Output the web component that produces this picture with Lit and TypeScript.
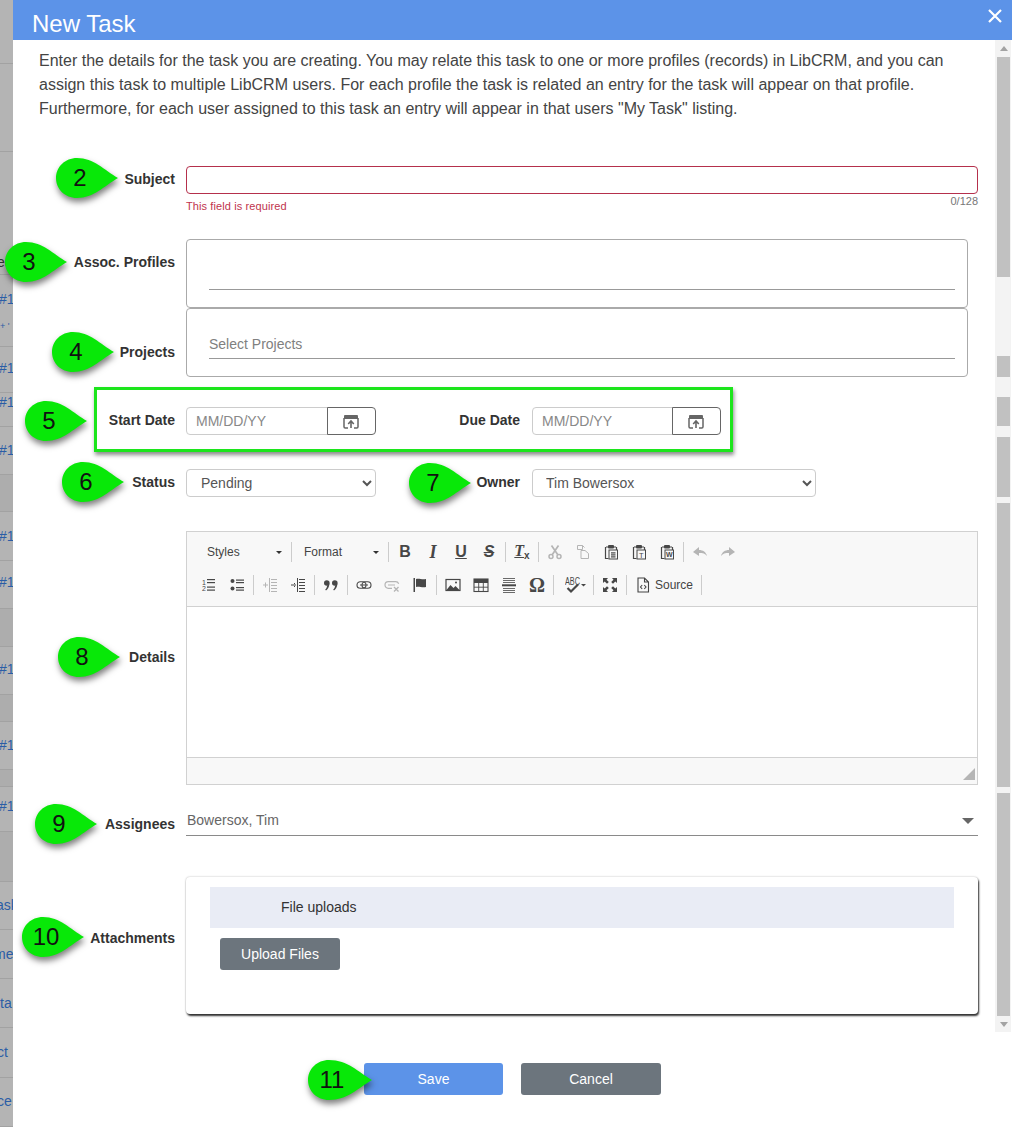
import { LitElement, html, css, svg } from "lit";
import { customElement } from "lit/decorators.js";

type StripRow = { h: number; t?: string; y?: number; x?: number; dark?: boolean; nb?: boolean; ink?: boolean; tiny?: boolean };
const stripRows: StripRow[] = [
  { h: 64 }, { h: 88 },
  { h: 123, t: "ee", y: 102, x: -3, ink: true },
  { h: 36, t: "#1", y: 16, nb: true }, { h: 36, t: "+ '", y: 7, x: 0, tiny: true },
  { h: 46, t: "#1", y: 13 }, { h: 34, t: "#1", y: 1 }, { h: 48, t: "#1", y: 15 },
  { h: 37, dark: true }, { h: 49, t: "#1", y: 16 }, { h: 48, t: "#1", y: 13 },
  { h: 38, dark: true }, { h: 48, t: "#1", y: 14 }, { h: 27, dark: true },
  { h: 48, t: "#1", y: 15 }, { h: 17, dark: true }, { h: 45, t: "#1", y: 11 },
  { h: 50, dark: true }, { h: 48, t: "ask", y: 15, x: -4 }, { h: 49, t: "me", y: 16, x: -6 },
  { h: 49, t: "ta", y: 16, x: 0 }, { h: 50, t: "ct", y: 16, x: -3 }, { h: 49, t: "ce", y: 15, x: -3 },
];
const thumb: [number, boolean][] = [
  [220, true], [79, false], [21, true], [20, false], [29, true], [11, false],
  [60, true], [6, false], [284, true], [6, false], [223, true],
];
const pins: [string, number, number, number][] = [
  ["2", 56, 158, 62], ["3", 5, 242, 62], ["4", 52, 332, 62], ["5", 25, 401, 62], ["6", 62, 462, 62],
  ["7", 409, 463, 62], ["8", 58, 637, 62], ["9", 35, 804, 62], ["10", 22, 917, 62], ["11", 308, 1060, 64],
];

const I = (body: unknown, cls = "") => html`<span class="tb ${cls}"><svg width="16" height="16" viewBox="0 0 16 16">${body}</svg></span>`;
const clip = (inner: unknown) => svg`<path d="M3 3h2M11 3h2M2.500 3v11.500h3M13.500 3v3" fill="none" stroke="currentColor" stroke-width="1.200"/><rect x="5" y="1" width="6" height="3.400" rx="1"/><rect x="6" y="6" width="8.500" height="9" fill="#f8f8f8" stroke="currentColor" stroke-width="1"/>${inner}`;
const lines = (ys: number[], x1: number, x2: number, t = 1.2) => ys.map((y) => svg`<rect x=${x1} y=${y} width=${x2 - x1} height=${t}/>`);

@customElement("app-root")
export class AppRoot extends LitElement {
  static styles = css`
    :host { display: block; position: relative; width: 1012px; height: 1127px; overflow: hidden; background: #fff;
      font-family: "Liberation Sans", Arial, sans-serif; color: #333; }
    .page { display: flex; height: 1127px; }
    .strip { width: 13px; flex: none; background: #b4b4b4; overflow: hidden; }
    .srow { box-sizing: border-box; border-bottom: 1px solid #a2a2a2; font-size: 14px; line-height: 16px; color: #2b5da6; white-space: nowrap; overflow: hidden; }
    .srow.dark { background: #adadad; }
    .srow.nb { border-bottom: 0; }
    .srow.ink { color: #333; }
    .srow.tiny { font-size: 9px; }
    .modal { flex: 1; min-width: 0; display: flex; flex-direction: column; }
    .head { height: 40px; flex: none; background: #5c93e8; color: #fff; display: flex; align-items: center; justify-content: space-between; padding: 0 9px 0 19px; }
    .title { font-size: 24px; padding-top: 7px; height: 40px; box-sizing: border-box; line-height: 33px; }
    .close { width: 16px; height: 16px; margin-bottom: 8px; }
    .main { display: flex; height: 992px; flex: none; }
    .form { width: 982px; flex: none; }
    .intro { margin: 9px 0 0 26px; font-size: 16px; line-height: 24px; color: #444; white-space: nowrap; }
    .row { display: grid; grid-template-columns: 162px 792px; column-gap: 11px; }
    .lab { font-size: 14px; line-height: 16px; font-weight: 700; color: #333; text-align: right; }
    .subject { margin-top: 45px; }
    .subject .lab { padding-top: 5px; }
    input { box-sizing: border-box; font: inherit; font-size: 14px; outline: none; background: #fff; }
    input::placeholder { color: #888; opacity: 1; }
    .req { display: block; width: 100%; height: 28px; border: 1px solid #b5304c; border-radius: 4px; }
    .hints { display: flex; justify-content: space-between; font-size: 11px; line-height: 14px; height: 19px; }
    .err { color: #c0334d; margin-top: 5px; letter-spacing: .1px; }
    .count { color: #777; }
    .assoc { margin-top: 26px; }
    .assoc .lab { padding-top: 15px; }
    .projects .lab { padding-top: 36px; }
    .chipbox { box-sizing: border-box; width: 782px; height: 69px; border: 1px solid #aaa; border-radius: 4px; padding: 0 12px 0 22px; display: flex; flex-direction: column; justify-content: flex-end; }
    .chipfield { box-sizing: border-box; border-bottom: 1px solid #999; height: 29px; margin-bottom: 17px; font-size: 14px; line-height: 16px; color: #808080; padding-top: 6px; }
    .pair { display: grid; grid-template-columns: 173px 190px 156px 1fr; height: 28px; }
    .pair .lab { align-self: center; padding-right: 11px; margin-top: -3px; }
    .pair .lab.second { padding-right: 12px; }
    .dates { margin-top: 30px; }
    .selects { margin-top: 34px; }
    .date { display: flex; }
    .date input { width: 142px; height: 28px; border: 1px solid #ccc; border-radius: 4px 0 0 4px; padding: 0 9px; }
    .date.b input { width: 141px; }
    .date button { width: 49px; height: 28px; margin-left: -1px; padding: 0 1px 0 0; border: 1px solid #666; border-radius: 0 4px 4px 0; background: #fff; color: #666; display: flex; align-items: center; justify-content: center; }
    select { box-sizing: border-box; height: 28px; border: 1px solid #ccc; border-radius: 4px; background: #fff; font: 14px "Liberation Sans", Arial, sans-serif; color: #555; padding-left: 10px; }
    .s1 { width: 190px; }
    .s2 { width: 284px; padding-left: 9px; }
    .details { margin-top: 34px; }
    .details .lab { align-self: center; margin-top: -2px; }
    .editor { box-sizing: border-box; height: 254px; border: 1px solid #d1d1d1; display: flex; flex-direction: column; }
    .toolbar { box-sizing: border-box; height: 75px; background: #f8f8f8; border-bottom: 1px solid #d1d1d1; padding-top: 4px; }
    .tr { display: flex; align-items: center; height: 32px; margin-bottom: 1px; color: #474747; }
    .tr.second { padding-left: 8px; }
    .combo { display: flex; align-items: center; justify-content: space-between; height: 32px; box-sizing: border-box; font-size: 12px; color: #444; }
    .combo::after { content: ""; border: 3px solid transparent; border-top: 3px solid #333; border-bottom: 0; }
    .c1 { width: 102px; padding: 0 7px 0 20px; }
    .c2 { width: 92px; padding: 0 7px 0 10px; }
    .sep { width: 1px; height: 20px; margin: 0 2px; background: #ccc; flex: none; }
    .tb { width: 28px; height: 32px; flex: none; display: flex; align-items: center; justify-content: center; color: #474747; fill: currentColor; line-height: 16px; }
    .tb.off { color: #b5b5b5; }
    .tb.wide { width: 35px; justify-content: flex-start; padding-left: 9px; box-sizing: border-box; }
    .tb.src { width: 70px; justify-content: flex-start; padding-left: 7px; box-sizing: border-box; gap: 5px; font-size: 12px; color: #444; }
    .ltr { font-size: 16px; font-weight: 700; color: #474747; }
    .ltr.it { font-family: "Liberation Serif", serif; font-style: italic; font-size: 18px; }
    .ltr.un { text-decoration: underline; }
    .ltr.st { text-decoration: line-through; font-style: italic; }
    .ltr.om { font-family: "Liberation Serif", serif; font-size: 20px; }
    .tx { font-family: "Liberation Serif", serif; font-style: italic; font-weight: 700; font-size: 16px; text-decoration: underline; color: #474747; }
    .tx small { font: 700 10px "Liberation Sans", sans-serif; vertical-align: -3px; display: inline-block; }
    .body { flex: 1; background: #fff; }
    .foot { height: 27px; flex: none; box-sizing: border-box; background: #f8f8f8; border-top: 1px solid #d1d1d1; display: flex; justify-content: flex-end; align-items: flex-end; padding: 0 2px 4px 0; }
    .assign { margin-top: 21px; }
    .assign .lab { padding-top: 10px; }
    .afield { box-sizing: border-box; height: 30px; border-bottom: 1px solid #8a8a8a; display: flex; justify-content: space-between; align-items: flex-start; font-size: 14px; line-height: 16px; color: #666; padding: 6px 4px 0 1px; }
    .afield::after { content: ""; border: 6px solid transparent; border-top: 6px solid #666; border-bottom: 0; margin-top: 6px; }
    .attach { margin-top: 41px; }
    .attach .lab { padding-top: 53px; }
    .card { box-sizing: border-box; height: 137px; background: #fff; border-radius: 4px; padding: 10px 24px; box-shadow: 1px 2px 2px rgba(0,0,0,.8), 0 0 2px rgba(0,0,0,.3); }
    .band { background: #e9ecf5; height: 41px; display: flex; align-items: center; padding: 0 0 2px 71px; box-sizing: border-box; font-size: 14px; color: #333; }
    .btn { box-sizing: border-box; display: flex; align-items: center; justify-content: center; height: 32px; border-radius: 3px; color: #fff; font-size: 14px; border: 0; font-family: inherit; background: #6c757d; padding: 0; }
    .up { width: 120px; margin: 10px 0 0 10px; }
    .scroll { width: 16px; flex: none; box-sizing: border-box; background: #f3f3f3; padding: 0 1px 0 2px; }
    .arrow { height: 17px; display: flex; align-items: center; justify-content: center; }
    .arrow.a::before { content: ""; border: 4px solid transparent; border-bottom: 5px solid #a3a3a3; border-top: 0; }
    .arrow.b { height: 16px; }
    .arrow.b::before { content: ""; border: 4px solid transparent; border-top: 5px solid #a3a3a3; border-bottom: 0; }
    .seg.on { background: #c1c1c1; }
    .actions { display: flex; gap: 18px; padding: 31px 0 0 351px; }
    .save { width: 139px; background: #5c93e8; }
    .cancel { width: 140px; }
    .focus { position: absolute; left: 94px; top: 387px; width: 639px; height: 65px; box-sizing: border-box; border: 3px solid #1ce51c; box-shadow: 1px 3px 4px rgba(0,0,0,.45); pointer-events: none; }
    .pin { position: absolute; height: 40px; display: flex; align-items: center; font-size: 24px; line-height: 28px; color: #111; }
    .pin svg { position: absolute; left: 0; top: 0; overflow: visible; filter: drop-shadow(1px 4px 3px rgba(0,0,0,.5)); }
    .pin span { position: relative; width: 48px; text-align: center; }
  `;

  private cal() {
    return html`<svg width="16" height="15" viewBox="0 0 16 15"><path d="M1 2.200C1 1.500 1.500 1 2.200 1h11.600c.7 0 1.200.5 1.200 1.200V5H1z" fill="currentColor"/><path d="M1 4v8.800c0 .7.5 1.200 1.200 1.200H5M15 4v8.800c0 .7-.5 1.200-1.200 1.200H11" fill="none" stroke="currentColor" stroke-width="1.500"/><path d="M8 14V7.500M5.200 10 8 7l2.800 3" fill="none" stroke="currentColor" stroke-width="1.600"/></svg>`;
  }

  private toolbar() {
    const sep = html`<span class="sep"></span>`;
    return html`<div class="toolbar">
      <div class="tr">
        <span class="combo c1">Styles</span>${sep}<span class="combo c2">Format</span>${sep}
        <span class="tb ltr">B</span><span class="tb ltr it">I</span><span class="tb"><span class="ltr un">U</span></span><span class="tb"><span class="ltr st">S</span></span>${sep}
        <span class="tb"><span class="tx">T<small>x</small></span></span>${sep}
        ${I(svg`<circle cx="4" cy="12.500" r="2" fill="none" stroke="currentColor" stroke-width="1.500"/><circle cx="12" cy="12.500" r="2" fill="none" stroke="currentColor" stroke-width="1.500"/><path d="M5 11 11.500 1.500M11 11 4.500 1.500" stroke="currentColor" stroke-width="1.700" fill="none"/>`, "off")}
        ${I(svg`<path d="M2.500 1.500h5v4h-5zM7.500 1.500l2 2M6 6.500h4l3.500 3v5H6z" fill="none" stroke="currentColor"/>`, "off")}
        ${I(clip(lines([8.3, 10.3, 12.3], 8, 12.5)))}
        ${I(clip(svg`<text x="10.200" y="13.500" font-size="7.500" font-family="Liberation Sans" text-anchor="middle">T</text>`))}
        ${I(clip(svg`<text x="10.200" y="13.300" font-size="7" font-weight="700" font-family="Liberation Sans" text-anchor="middle">W</text>`))}
        ${sep}
        ${I(svg`<path d="M1 8 7 3v3c4 0 7 2 8 6-2-2.500-4-3-8-3v3z"/>`, "off")}
        ${I(svg`<path d="M15 8 9 3v3c-4 0-7 2-8 6 2-2.500 4-3 8-3v3z"/>`, "off")}
      </div>
      <div class="tr second">
        ${I(svg`<text x="1" y="7.500" font-size="7" font-family="Liberation Sans">1</text><text x="1" y="14" font-size="7" font-family="Liberation Sans">2</text>${lines([2, 5, 9.5, 12.5], 6, 14)}`)}
        ${I(svg`<circle cx="3.500" cy="4" r="2"/><circle cx="3.500" cy="11.500" r="2"/>${lines([2.5, 5, 10, 12.5], 7, 15)}`)}
        ${sep}
        ${I(svg`${lines([2, 5, 8, 11, 14], 9, 15, 1)}<rect x="7" y="1" width="1" height="14"/><rect x="1" y="7.500" width="5" height="1"/><rect x="3" y="5.500" width="1" height="5"/>`, "off")}
        ${I(svg`${lines([2, 5, 8, 11, 14], 9, 15, 1)}<rect x="7" y="1" width="1" height="14"/><rect x="1" y="7.500" width="5" height="1"/><rect x="4" y="6" width="1" height="1"/><rect x="4" y="9" width="1" height="1"/>`)}
        ${sep}
        ${I(svg`<circle cx="3.800" cy="6" r="2.800"/><path d="M6.400 6.500C6.400 10 4.500 12.500 3 13.500L2.200 12.600C3.500 11.500 4 10 4 8.800z"/><circle cx="11.800" cy="6" r="2.800"/><path d="M14.400 6.500C14.400 10 12.500 12.500 11 13.500L10.200 12.600C11.500 11.500 12 10 12 8.800z"/>`)}
        ${sep}
        ${I(svg`<rect x="1" y="4.700" width="9" height="6.600" rx="3.300" fill="none" stroke="currentColor" stroke-width="1.100"/><rect x="6" y="4.700" width="9" height="6.600" rx="3.300" fill="none" stroke="currentColor" stroke-width="1.100"/><rect x="4" y="7.500" width="8" height="1"/>`)}
        ${I(svg`<path d="M8 11.300H4.300a3.300 3.300 0 0 1 0-6.600h7.400a3.300 3.300 0 0 1 3 2M4 8h7" fill="none" stroke="currentColor" stroke-width="1.200"/><path d="m10 10 4.500 4.500m0-4.500L10 14.500" stroke="currentColor" stroke-width="1.300"/>`, "off")}
        ${I(svg`<rect x="1.500" y="1" width="1.500" height="14"/><path d="M4 2c3-1 6 1 10 0v8c-4 1-7-1-10 0z"/>`)}
        ${sep}
        ${I(svg`<rect x="1" y="2.500" width="14" height="11" fill="none" stroke="currentColor" stroke-width="1.200"/><path d="m1.500 13 4-5 3 3 2-2 4 4z"/><circle cx="11" cy="5.500" r="1"/>`)}
        ${I(svg`<rect x="1" y="2" width="14" height="12.500" fill="none" stroke="currentColor" stroke-width="1.100"/><rect x="1" y="2" width="14" height="4"/><path d="M1 10.200h14M5.700 6v8M10.300 6v8" stroke="currentColor" stroke-width=".9"/>`)}
        ${I(svg`${lines([1, 3, 5, 11, 13, 15], 2, 14, 0.8)}<rect x="1" y="7.300" width="14" height="2"/>`)}
        <span class="tb"><span class="ltr om">Ω</span></span>
        ${sep}
        <span class="tb wide"><svg width="22" height="18" viewBox="0 0 22 18"><text x="0" y="9" font-size="10" font-family="Liberation Sans" textLength="15" lengthAdjust="spacingAndGlyphs">ABC</text><path d="m2.500 12 3.500 3.500 7-7" fill="none" stroke="currentColor" stroke-width="2.200"/><path d="m16 8 5 0-2.500 2.500z"/></svg></span>
        ${sep}
        ${I(svg`<path d="M1 1h5L4.500 2.700 6.800 5 5 6.800 2.700 4.500 1 6zM15 1v5l-1.700-1.500L11 6.800 9.200 5l2.300-2.300L10 1zM1 15v-5l1.700 1.500L5 9.200 6.800 11l-2.300 2.300L6 15zM15 15h-5l1.500-1.700L9.200 11l1.800-1.800 2.300 2.300L15 10z"/>`)}
        ${sep}
        <span class="tb src"><svg width="14" height="16" viewBox="0 0 14 16"><path d="M2 1h6.500L12.500 5v10H2zM8.500 1v4h4" fill="none" stroke="currentColor" stroke-width="1.100"/><path d="M6.200 8 4.500 10l1.700 2M8.300 8 10 10l-1.700 2" fill="none" stroke="currentColor" stroke-width="1.100"/></svg>Source</span>
        ${sep}
      </div>
    </div>`;
  }

  render() {
    return html`<div class="page">
      <div class="strip">
        ${stripRows.map((r) => html`<div class="srow ${r.dark ? "dark" : ""} ${r.nb ? "nb" : ""} ${r.ink ? "ink" : ""} ${r.tiny ? "tiny" : ""}" style="height:${r.h}px;padding-top:${r.y ?? 0}px;text-indent:${r.x ?? -1}px">${r.t ?? ""}</div>`)}
      </div>
      <div class="modal">
        <div class="head"><div class="title">New Task</div>
          <svg class="close" viewBox="0 0 16 16"><path d="M2 2l12 12M14 2 2 14" stroke="#fff" stroke-width="2.200"/></svg></div>
        <div class="main">
          <div class="form">
            <p class="intro">Enter the details for the task you are creating. You may relate this task to one or more profiles (records) in LibCRM, and you can<br>assign this task to multiple LibCRM users. For each profile the task is related an entry for the task will appear on that profile.<br>Furthermore, for each user assigned to this task an entry will appear in that users "My Task" listing.</p>
            <div class="row subject"><div class="lab">Subject</div><div><input class="req" />
              <div class="hints"><span class="err">This field is required</span><span class="count">0/128</span></div></div></div>
            <div class="row assoc"><div class="lab">Assoc. Profiles</div><div class="chipbox"><div class="chipfield"></div></div></div>
            <div class="row projects"><div class="lab">Projects</div><div class="chipbox"><div class="chipfield">Select Projects</div></div></div>
            <div class="pair dates">
              <div class="lab">Start Date</div>
              <div class="date"><input placeholder="MM/DD/YY" /><button>${this.cal()}</button></div>
              <div class="lab second">Due Date</div>
              <div class="date b"><input placeholder="MM/DD/YY" /><button>${this.cal()}</button></div>
            </div>
            <div class="pair selects">
              <div class="lab">Status</div>
              <div><select class="s1"><option>Pending</option></select></div>
              <div class="lab second">Owner</div>
              <div><select class="s2"><option>Tim Bowersox</option></select></div>
            </div>
            <div class="row details"><div class="lab">Details</div>
              <div class="editor">${this.toolbar()}<div class="body"></div>
                <div class="foot"><svg width="12" height="12" viewBox="0 0 12 12"><path d="M12 0v12H0z" fill="#b5b5b5"/></svg></div></div></div>
            <div class="row assign"><div class="lab">Assignees</div><div class="afield">Bowersox, Tim</div></div>
            <div class="row attach"><div class="lab">Attachments</div>
              <div class="card"><div class="band">File uploads</div><button class="btn up">Upload Files</button></div></div>
          </div>
          <div class="scroll">
            <div class="arrow a"></div>
            ${thumb.map(([h, on]) => html`<div class="seg ${on ? "on" : ""}" style="height:${h}px"></div>`)}
            <div class="arrow b"></div>
          </div>
        </div>
        <div class="actions"><button class="btn save">Save</button><button class="btn cancel">Cancel</button></div>
      </div>
    </div>
    <div class="focus"></div>
    ${pins.map(([n, x, y, w]) => html`<div class="pin" style="left:${x}px;top:${y}px;width:${w}px">
      <svg width=${w} height="40" viewBox="0 0 ${w} 40"><path d="M${w} 20C${w - 14} 12 ${w - 24} 0 21 0 9 0 0 9 0 20s9 20 21 20C${w - 24} 40 ${w - 14} 28 ${w} 20z" fill="#08e808"/></svg>
      <span>${n}</span></div>`)}`;
  }
}
